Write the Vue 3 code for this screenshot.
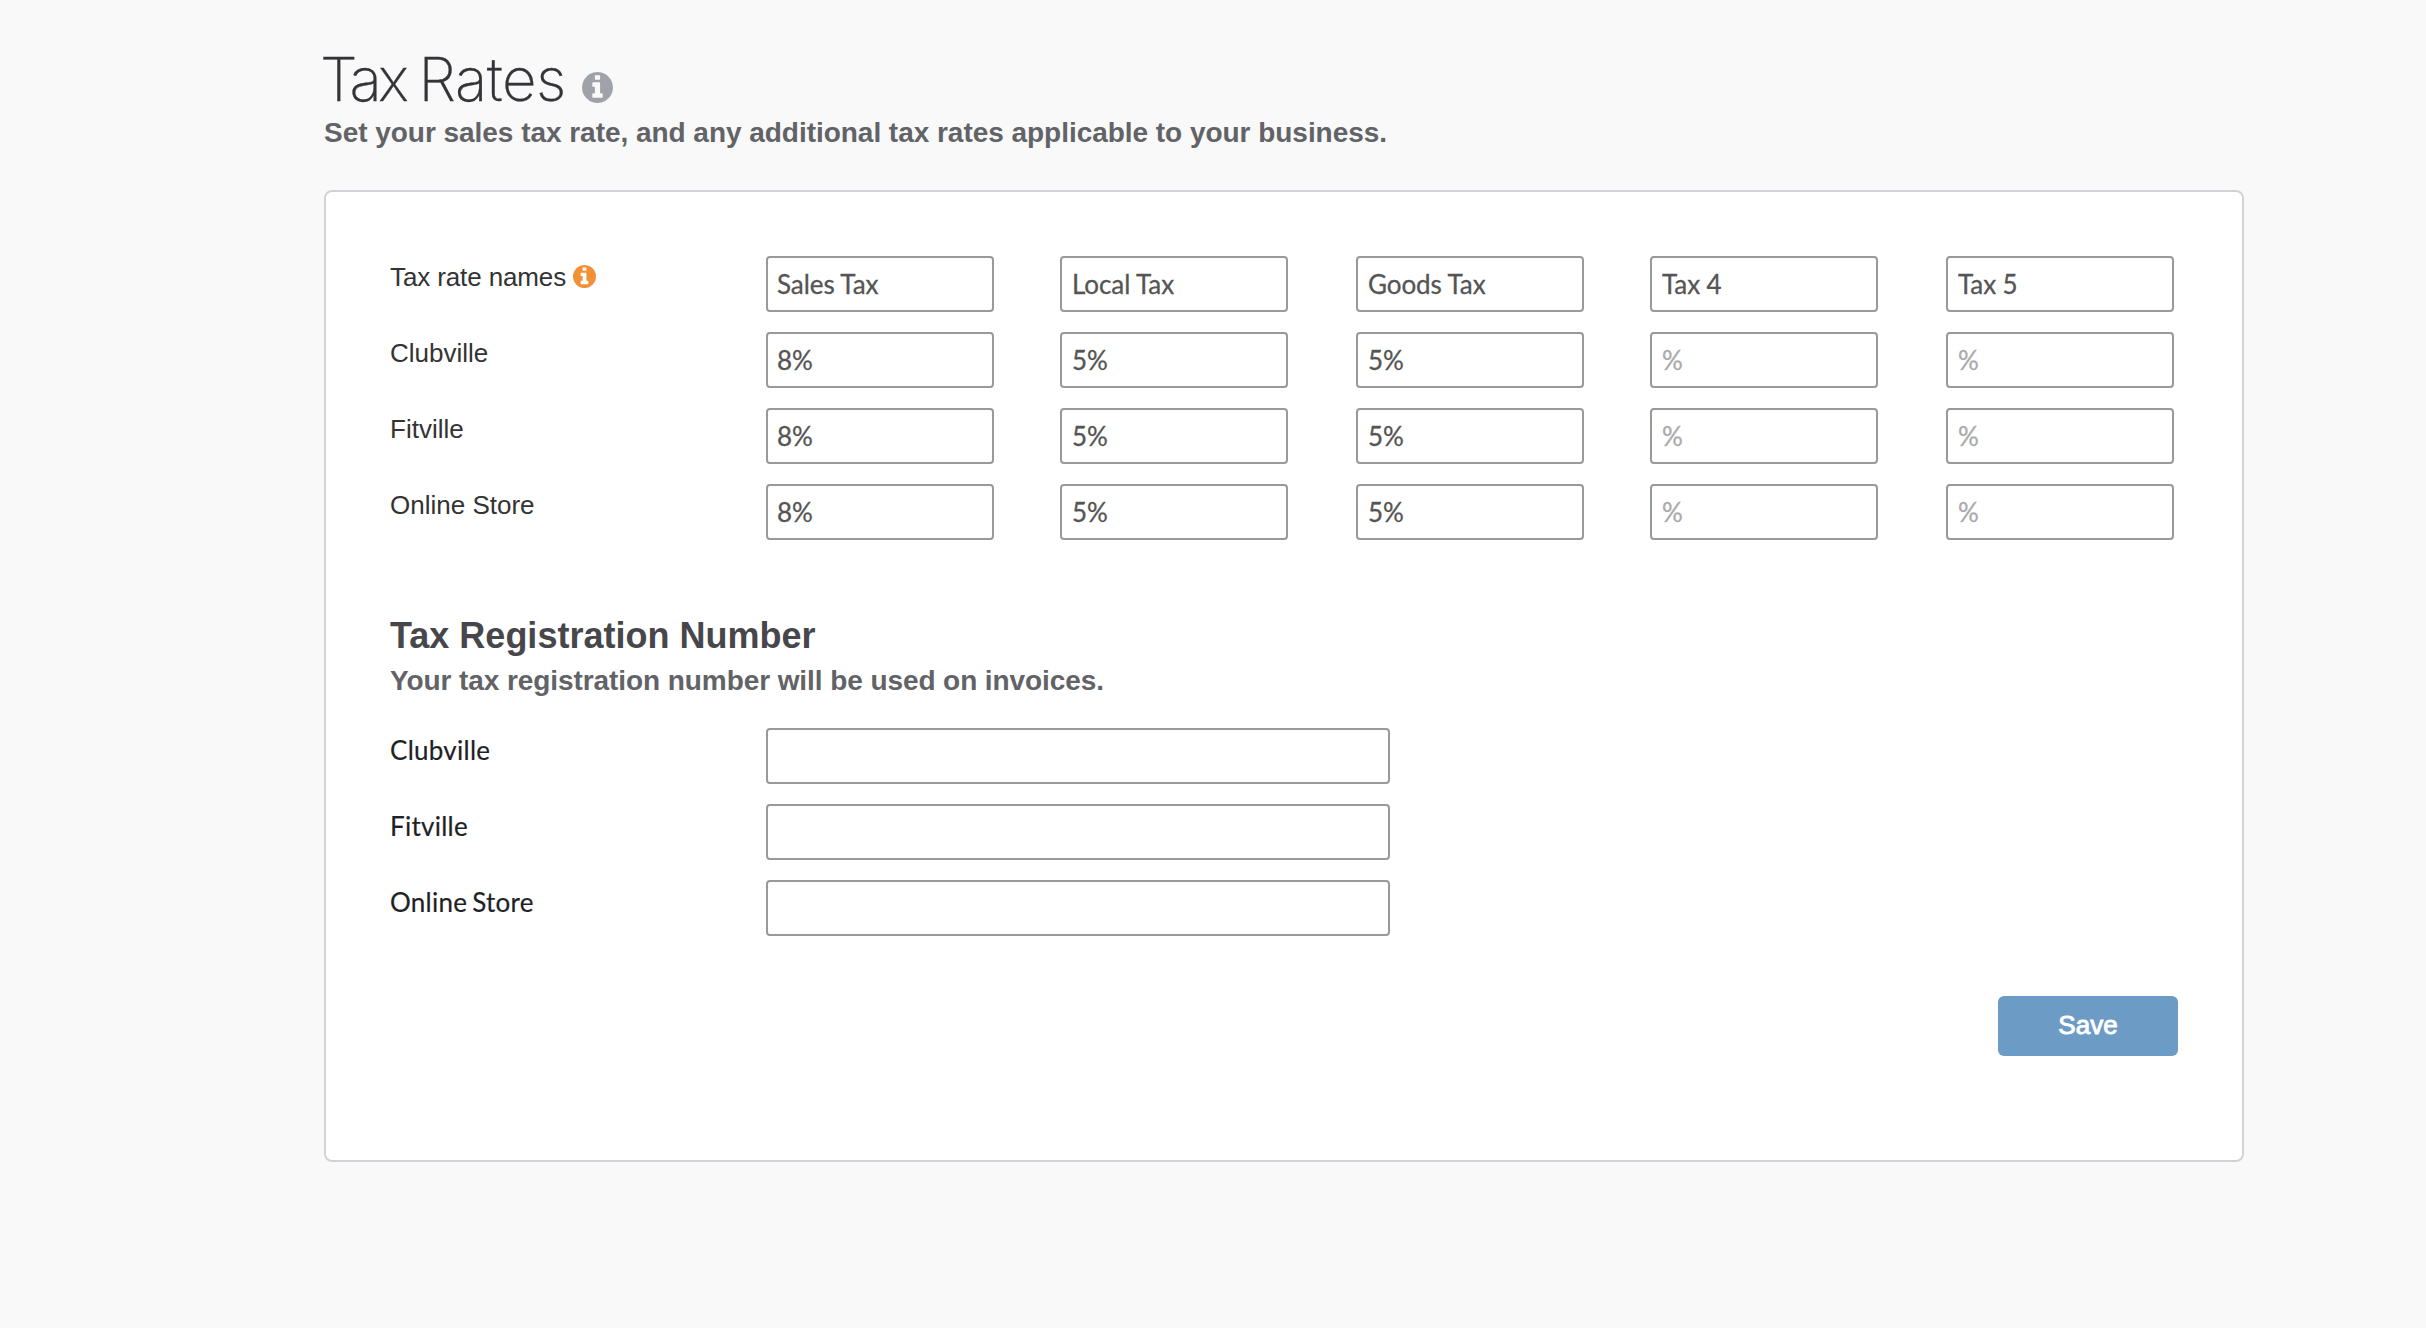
<script setup>
const rates = [
  { label: 'Clubville', values: ['8%', '5%', '5%', '', ''] },
  { label: 'Fitville', values: ['8%', '5%', '5%', '', ''] },
  { label: 'Online Store', values: ['8%', '5%', '5%', '', ''] },
]
const names = ['Sales Tax', 'Local Tax', 'Goods Tax', 'Tax 4', 'Tax 5']
const infoPath = 'M1152 1376v-160q0-14-9-23t-23-9h-96v-512q0-14-9-23t-23-9h-320q-14 0-23 9t-9 23v160q0 14 9 23t23 9h96v320h-96q-14 0-23 9t-9 23v160q0 14 9 23t23 9h448q14 0 23-9t9-23zm-128-896v-160q0-14-9-23t-23-9h-192q-14 0-23 9t-9 23v160q0 14 9 23t23 9h192q14 0 23-9t9-23zm640 416q0 209-103 385.5t-279.5 279.5-385.5 103-385.5-103-279.5-279.5-103-385.5 103-385.5 279.5-279.5 385.5-103 385.5 103 279.5 279.5 103 385.5z'
</script>

<template>
  <main class="page">
    <header class="head">
      <h1><span class="tight">Tax </span>Rates</h1>
      <svg class="info big" viewBox="128 128 1536 1536"><path :d="infoPath" /></svg>
    </header>
    <p class="sub">Set your sales tax rate, and any additional tax rates applicable to your business.</p>

    <section class="card">
      <div class="row">
        <div class="label names">Tax rate names<svg class="info small" viewBox="128 128 1536 1536"><path :d="infoPath" /></svg></div>
        <div class="fields"><input v-for="n in names" :key="n" type="text" :value="n" /></div>
      </div>
      <div v-for="r in rates" :key="r.label" class="row">
        <div class="label">{{ r.label }}</div>
        <div class="fields"><input v-for="(v, i) in r.values" :key="i" type="text" :value="v" placeholder="%" /></div>
      </div>

      <h2>Tax Registration Number</h2>
      <p class="sub reg">Your tax registration number will be used on invoices.</p>
      <div v-for="r in rates" :key="r.label" class="row">
        <div class="label dark">{{ r.label }}</div>
        <input class="wide" type="text" />
      </div>

      <div class="actions"><button type="button">Save</button></div>
    </section>
  </main>
</template>

<style>
body { background: #f9f9f9; }
</style>

<style scoped>
.page {
  box-sizing: border-box;
  height: 1328px;
  padding: 42px 182px 0 324px;
  background: #f9f9f9;
  font-family: "Liberation Sans", Arial, sans-serif;
}
.head { display: flex; align-items: flex-start; height: 71px; }
h1 {
  margin: 0 0 0 -4px;
  width: 262px;
  font: 200 60px/74px Inter, sans-serif;
  letter-spacing: -0.5px;
  color: #333338;
  -webkit-text-stroke: 0.3px #333338;
  white-space: nowrap;
}
.tight { letter-spacing: -3.7px; }
.info { display: block; flex: none; }
.big { width: 31px; height: 31px; margin-top: 30px; fill: #9fa2a8; }
.small { width: 23px; height: 23px; margin: 3px 0 0 7px; fill: #f19035; }
.sub {
  margin: 0;
  font-size: 28px;
  line-height: 40px;
  font-weight: 700;
  letter-spacing: -0.035px;
  color: #626367;
  white-space: nowrap;
}
.card {
  box-sizing: border-box;
  height: 972px;
  margin-top: 37px;
  padding: 64px 64px 0;
  border: 2px solid #d2d2d7;
  border-radius: 8px;
  background: #fff;
}
.row { display: flex; height: 56px; margin-bottom: 20px; }
.label {
  display: flex;
  width: 376px;
  padding-top: 6px;
  font-size: 26px;
  line-height: 30px;
  color: #333;
  white-space: nowrap;
}
.names { letter-spacing: -0.12px; }
.dark {
  padding-top: 7px;
  font-family: Lato, sans-serif;
  letter-spacing: 0.27px;
  word-spacing: -2px;
  color: #1f1f26;
  -webkit-text-stroke: 0.2px #1f1f26;
}
.fields { display: grid; grid-template-columns: 294px 296px 294px 296px 228px; }
input {
  box-sizing: border-box;
  width: 228px;
  height: 56px;
  margin: 0;
  padding: 0 10px;
  border: 2px solid #999;
  border-radius: 4px;
  background: #fff;
  font: 26px Lato, sans-serif;
  letter-spacing: -0.08px;
  color: #555;
  -webkit-text-stroke: 0.3px currentColor;
  outline: none;
}
input:first-child { padding-left: 9px; }
input::placeholder { color: #aaa; opacity: 1; }
.wide { width: 624px; }
h2 { margin: 74px 0 0; font-size: 36px; line-height: 44px; color: #47474b; }
.reg { margin: 3px 0 27px; letter-spacing: -0.08px; }
.actions { display: flex; justify-content: flex-end; margin-top: 60px; }
button {
  width: 180px;
  height: 60px;
  padding: 0 0 1px;
  border: 0;
  border-radius: 6px;
  background: #6c9bc6;
  font: 26px "Liberation Sans", Arial, sans-serif;
  color: #fff;
  -webkit-text-stroke: 0.9px #fff;
}
</style>
